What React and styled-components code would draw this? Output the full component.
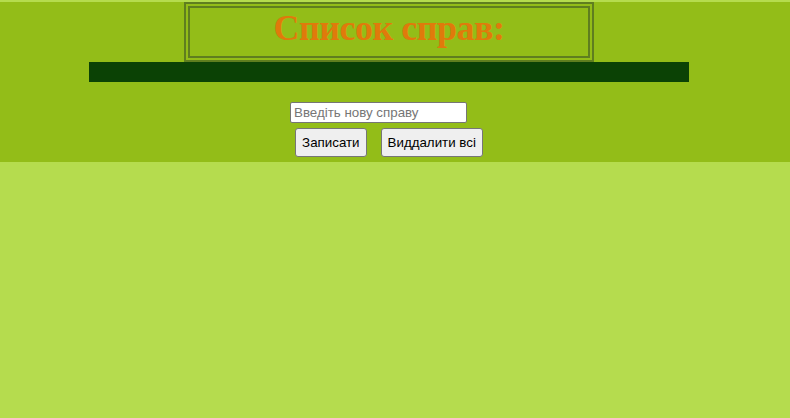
import styled, { createGlobalStyle } from "styled-components";

const GlobalStyle = createGlobalStyle`
  html, body {
    margin: 0;
    padding: 0;
    background-color: #b5dc4e;
  }
  body {
    font-family: "Liberation Sans", Arial, sans-serif;
  }
`;

const Header = styled.header`
  display: flex;
  flex-direction: column;
  align-items: center;
  margin-top: 2px;
  padding: 0 12px 5px 0;
  background-color: #93bd18;
`;

const TitleBox = styled.div`
  box-sizing: border-box;
  width: 410px;
  height: 60px;
  display: flex;
  justify-content: center;
  align-items: flex-start;
  border: 6px double #5f7e1f;
`;

const Title = styled.h1`
  margin: 0;
  font-family: "Liberation Serif", "Times New Roman", serif;
  font-size: 36px;
  line-height: 1.15;
  letter-spacing: -0.5px;
  font-weight: bold;
  color: #e07a0b;
`;

const Bar = styled.div`
  width: 600px;
  height: 20px;
  background-color: #0b4205;
`;

const Input = styled.input`
  box-sizing: border-box;
  width: 177px;
  height: 21px;
  margin: 20px 21px 0 0;
  padding: 1px 3px;
  border: 1px solid #767676;
  border-radius: 2px;
  font-family: "Liberation Sans", Arial, sans-serif;
  font-size: 13.33px;

  &::placeholder {
    color: #767676;
  }
`;

const Buttons = styled.div`
  display: flex;
  gap: 14px;
  margin-top: 5px;
`;

const Button = styled.button`
  box-sizing: border-box;
  height: 29px;
  padding: 0 6px;
  border: 1px solid #767676;
  border-radius: 3px;
  background-color: #efefef;
  color: #000;
  font-family: "Liberation Sans", Arial, sans-serif;
  font-size: 13.33px;
`;

export default function App() {
  return (
    <>
      <GlobalStyle />
      <Header>
        <TitleBox>
          <Title>Список справ:</Title>
        </TitleBox>
        <Bar />
        <Input type="text" placeholder="Введіть нову справу" />
        <Buttons>
          <Button>Записати</Button>
          <Button>Виддалити всі</Button>
        </Buttons>
      </Header>
    </>
  );
}
